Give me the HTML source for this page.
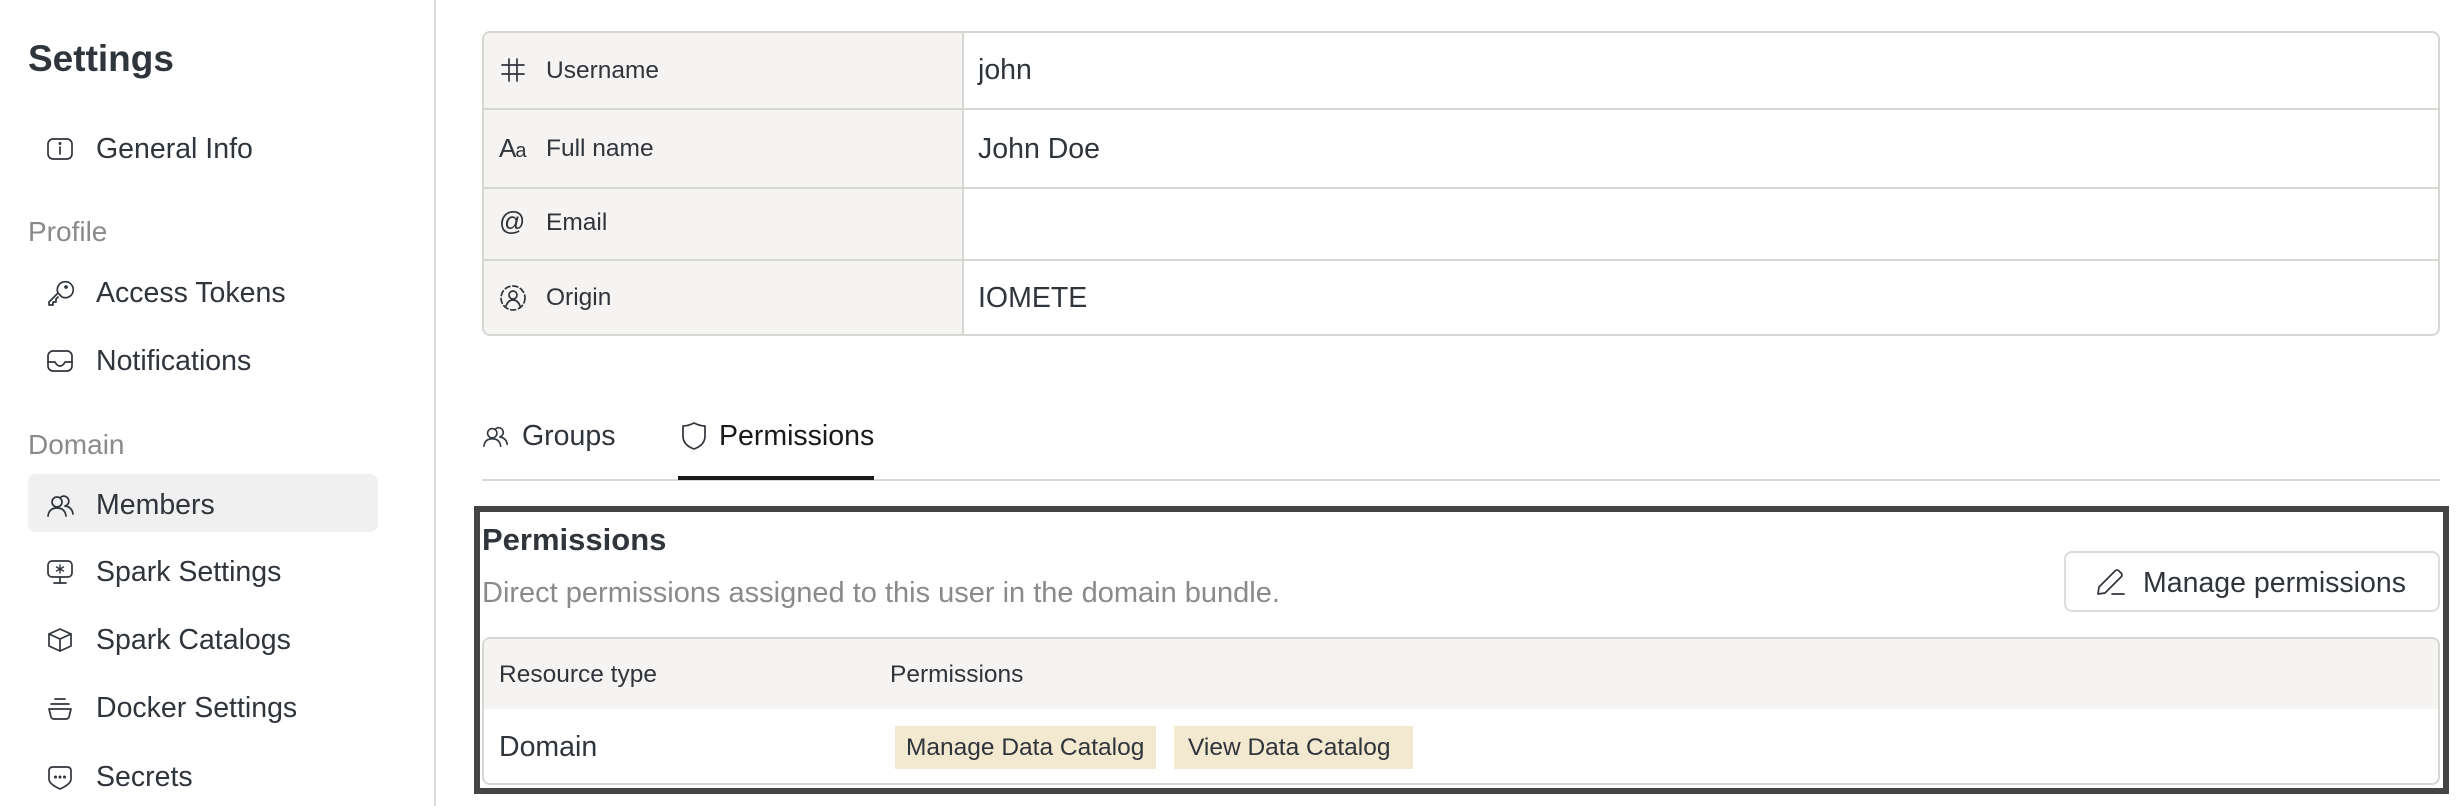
<!DOCTYPE html>
<html><head><meta charset="utf-8"><style>
*{box-sizing:border-box;margin:0;padding:0}
body{width:2462px;height:806px;overflow:hidden;background:#fff;font-family:"Liberation Sans",sans-serif;color:#30343b;position:relative}
.a{position:absolute;white-space:nowrap}
.side{position:absolute;left:434px;top:0;width:2px;height:806px;background:#dcdcdc}
.nav{position:absolute;left:96px;font-size:28.5px;line-height:34px;color:#30343b}
.ic{position:absolute;fill:none;stroke:#30343b;stroke-width:1.7;stroke-linecap:round;stroke-linejoin:round}
.sec{position:absolute;left:28px;font-size:28px;color:#8a8a8a;line-height:34px}
.lbl{position:absolute;left:546px;font-size:24.5px;color:#30343b;line-height:30px}
.val{position:absolute;left:978px;font-size:28.5px;line-height:34px;color:#30343b}
.tag{position:absolute;top:726px;height:43px;background:#f3e8d0;font-size:24.5px;line-height:43px;padding:0 0 0 10px;color:#30343b}
</style></head><body>
<div class="a" style="left:28px;top:37px;font-size:37px;font-weight:bold;color:#30343b;line-height:44px">Settings</div>

<svg class="ic" style="left:46px;top:135px" width="28" height="28" viewBox="0 0 28 28"><rect x="2" y="4" width="24" height="20" rx="5"/><line x1="14" y1="12" x2="14" y2="19"/><circle cx="14" cy="8.5" r=".6" fill="#30343b"/></svg>
<div class="nav" style="top:132px">General Info</div>

<div class="sec" style="top:215px">Profile</div>
<svg class="ic" style="left:46px;top:279px" width="28" height="28" viewBox="0 0 28 28"><path d="M12 14 L3 23 L3 26 L7 26 L7 23 L10 23 L10 20 L12 18"/><path d="M12 14 A8 8 0 1 1 16 18 Z"/><circle cx="20" cy="8" r="1"/></svg>
<div class="nav" style="top:276px">Access Tokens</div>
<svg class="ic" style="left:46px;top:347px" width="28" height="28" viewBox="0 0 28 28"><rect x="2" y="4" width="24" height="20" rx="5"/><path d="M2 15 H9 Q11 19 14 19 Q17 19 19 15 H26"/></svg>
<div class="nav" style="top:344px">Notifications</div>

<div class="sec" style="top:428px">Domain</div>
<div style="position:absolute;left:28px;top:474px;width:350px;height:58px;background:#f0f0f0;border-radius:8px"></div>
<svg class="ic" style="left:46px;top:491px" width="30" height="28" viewBox="0 0 30 28"><circle cx="11" cy="11" r="5"/><path d="M2 25 Q3 17 11 17 Q19 17 20 25"/><path d="M15 6 A5 5 0 1 1 19 15 Q26 16 27 23"/></svg>
<div class="nav" style="top:488px">Members</div>
<svg class="ic" style="left:46px;top:558px" width="28" height="28" viewBox="0 0 28 28"><rect x="2" y="3" width="24" height="16" rx="4"/><line x1="14" y1="19" x2="14" y2="25"/><line x1="8" y1="25" x2="20" y2="25"/><path d="M14 7 V15 M10.5 9 L17.5 13 M17.5 9 L10.5 13" stroke-width="1.4"/></svg>
<div class="nav" style="top:555px">Spark Settings</div>
<svg class="ic" style="left:46px;top:626px" width="28" height="28" viewBox="0 0 28 28"><path d="M14 3 L25 8 V20 L14 25 L3 20 V8 Z"/><path d="M3 8 L14 13 L25 8 M14 13 V25"/></svg>
<div class="nav" style="top:623px">Spark Catalogs</div>
<svg class="ic" style="left:46px;top:694px" width="28" height="28" viewBox="0 0 28 28"><path d="M9 5 H19 M5 10 H23 M3 15 H25 L23 23 Q22 25 20 25 H8 Q6 25 5 23 Z"/></svg>
<div class="nav" style="top:691px">Docker Settings</div>
<svg class="ic" style="left:46px;top:763px" width="28" height="28" viewBox="0 0 28 28"><path d="M3 8 Q3 4 7 4 H21 Q25 4 25 8 V16 Q25 21 14 26 Q3 21 3 16 Z"/><circle cx="9.5" cy="14" r=".7" fill="#30343b"/><circle cx="14" cy="14" r=".7" fill="#30343b"/><circle cx="18.5" cy="14" r=".7" fill="#30343b"/></svg>
<div class="nav" style="top:760px">Secrets</div>

<div class="side"></div>

<div style="position:absolute;left:482px;top:31px;width:1958px;height:305px;border:2px solid #d6d6d3;border-radius:8px;overflow:hidden">
  <div style="position:absolute;left:0;top:0;width:480px;height:100%;background:#f5f4f2;border-right:2px solid #d6d6d3"></div>
  <div style="position:absolute;left:0;top:75px;width:100%;height:2px;background:#d6d6d3"></div>
  <div style="position:absolute;left:0;top:154px;width:100%;height:2px;background:#d6d6d3"></div>
  <div style="position:absolute;left:0;top:226px;width:100%;height:2px;background:#d6d6d3"></div>
</div>
<svg class="ic" style="left:500px;top:57px" width="26" height="26" viewBox="0 0 26 26" stroke-width="1.6"><path d="M9 2 V24 M17 2 V24 M2 8 H24 M2 17 H24"/></svg>
<div class="lbl" style="top:56px">Username</div>
<div class="val" style="top:53px">john</div>
<div class="a" style="left:499px;top:133px;font-size:26px;color:#30343b;letter-spacing:-1px">A<span style="font-size:20px">a</span></div>
<div class="lbl" style="top:134px">Full name</div>
<div class="val" style="top:132px">John Doe</div>
<div class="a" style="left:499px;top:206px;font-size:26px;color:#30343b">@</div>
<div class="lbl" style="top:208px">Email</div>
<svg class="ic" style="left:499px;top:284px" width="28" height="28" viewBox="0 0 28 28" stroke-width="1.6"><circle cx="14" cy="14" r="12" stroke-dasharray="5 3"/><circle cx="14" cy="11" r="4"/><path d="M7 22 Q9 16 14 16 Q19 16 21 22"/></svg>
<div class="lbl" style="top:283px">Origin</div>
<div class="val" style="top:281px">IOMETE</div>

<svg class="ic" style="left:482px;top:422px" width="28" height="28" viewBox="0 0 30 28" stroke-width="1.6"><circle cx="11" cy="11" r="5"/><path d="M2 25 Q3 17 11 17 Q19 17 20 25"/><path d="M15 6 A5 5 0 1 1 19 15 Q26 16 27 23"/></svg>
<div class="a" style="left:522px;top:419px;font-size:28.5px;line-height:34px;color:#30343b">Groups</div>
<svg class="ic" style="left:680px;top:421px" width="28" height="30" viewBox="0 0 28 30" stroke-width="1.8"><path d="M14 2 Q20 5 25 5 V15 Q25 24 14 28 Q3 24 3 15 V5 Q8 5 14 2 Z"/></svg>
<div class="a" style="left:719px;top:419px;font-size:28.5px;line-height:34px;color:#1a1a1a">Permissions</div>
<div style="position:absolute;left:482px;top:479px;width:1958px;height:2px;background:#d9d9d9"></div>
<div style="position:absolute;left:678px;top:476px;width:196px;height:4px;background:#1a1a1a"></div>

<div style="position:absolute;left:474px;top:506px;width:1975px;height:288px;border:6px solid #444"></div>
<div class="a" style="left:482px;top:521px;font-size:31px;font-weight:bold;line-height:38px;color:#30343b">Permissions</div>
<div class="a" style="left:482px;top:576px;font-size:29px;line-height:34px;color:#8a8a8a">Direct permissions assigned to this user in the domain bundle.</div>
<div style="position:absolute;left:2064px;top:551px;width:376px;height:61px;border:2px solid #dcdcdc;border-radius:8px;background:#fff"></div>
<svg class="ic" style="left:2094px;top:566px" width="34" height="32" viewBox="0 0 34 32" stroke-width="1.8"><path d="M4 28 L5 21 L21 5 Q23 3 25 5 L27 7 Q29 9 27 11 L11 27 Z"/><line x1="18" y1="28" x2="30" y2="28"/></svg>
<div class="a" style="left:2143px;top:566px;font-size:28.5px;line-height:34px;color:#30343b">Manage permissions</div>

<div style="position:absolute;left:482px;top:637px;width:1958px;height:148px;border:2px solid #d6d6d3;border-radius:8px;overflow:hidden">
  <div style="position:absolute;left:0;top:0;width:100%;height:70px;background:#f5f4f2"></div>
</div>
<div class="a" style="left:499px;top:660px;font-size:24.5px;line-height:30px;color:#30343b">Resource type</div>
<div class="a" style="left:890px;top:660px;font-size:24.5px;line-height:30px;color:#30343b">Permissions</div>
<div class="a" style="left:499px;top:730px;font-size:28.5px;line-height:34px;color:#30343b">Domain</div>
<div class="tag" style="left:895px;width:261px;padding-left:11px">Manage Data Catalog</div>
<div class="tag" style="left:1174px;width:239px;padding-left:14px">View Data Catalog</div>
</body></html>
